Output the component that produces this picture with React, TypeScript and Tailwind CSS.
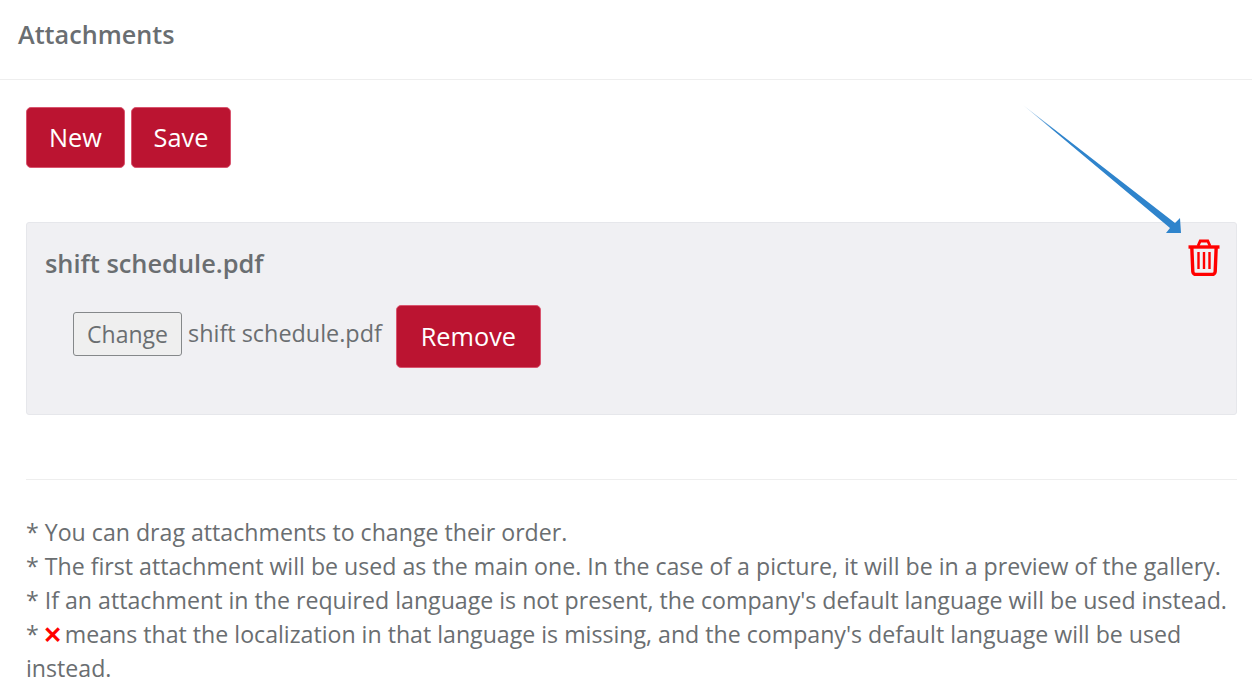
const openSans = { fontFamily: '"Open Sans", sans-serif' };

function TrashIcon() {
  return (
    <svg width="32" height="37" viewBox="0 0 32 37" fill="none" stroke="#ff0000" className="block">
      <path d="M0.500 8h31" strokeWidth="3.400" />
      <path d="M10 7l2.200-5h7.600l2.200 5" strokeWidth="2.800" />
      <path d="M3.800 8l1 24.500a3 3 0 0 0 3 3h16.400a3 3 0 0 0 3-3l1-24.500" strokeWidth="3.400" />
      <path d="M10.500 13v17M16 13v17M21.500 13v17" strokeWidth="2.400" />
    </svg>
  );
}

function RedButton({ label, className }: { label: string; className: string }) {
  return (
    <button className={`flex items-center justify-center rounded-[5px] border border-[#d9556f] bg-[#bb1431] text-[25.300px] text-white ${className}`}>
      {label}
    </button>
  );
}

export default function App() {
  return (
    <div className="relative h-[697px] w-[1252px] overflow-hidden bg-white text-[#6a6e71]" style={openSans}>
      {/* Header */}
      <div className="flex h-[80px] items-start border-b border-[#eeeeee] pl-[18px] pt-[17px]">
        <span className="text-[25.200px] font-semibold leading-[34px]">Attachments</span>
      </div>

      <div className="pl-[26px] pr-[15px] pt-[27px]">
        <div className="flex gap-[6px]">
          <RedButton label="New" className="h-[61px] w-[99px]" />
          <RedButton label="Save" className="h-[61px] w-[100px]" />
        </div>

        {/* Attachment card */}
        <div className="mt-[54px] h-[193px] rounded-[3px] border border-[#e6e7eb] bg-[#f0f0f3] pl-[18px] pt-[23px]">
          <div className="text-[25.400px] font-semibold leading-[34px]">shift schedule.pdf</div>
          <div className="mt-[25px] flex items-start pl-[28px]">
            <button className="mt-[7px] flex h-[44px] w-[109px] items-center justify-center rounded-[3px] border border-[#85888a] bg-[#efefef] text-[23px]">
              Change
            </button>
            <span className="ml-[6px] mt-[12px] text-[23.400px] leading-[32px]">shift schedule.pdf</span>
            <RedButton label="Remove" className="ml-[14px] h-[63px] w-[145px]" />
          </div>
        </div>

        <div className="mt-[64px] border-t border-[#eeeeee] pt-[35px] text-[23.150px] leading-[34px]">
          <div>* You can drag attachments to change their order.</div>
          <div>* The first attachment will be used as the main one. In the case of a picture, it will be in a preview of the gallery.</div>
          <div>* If an attachment in the required language is not present, the company's default language will be used instead.</div>
          <div>
            * <span className="-ml-[2px] -mr-[3px] font-bold text-[#ff0000]">✕</span> means that the localization in that language is missing, and the company's default language will be used instead.
          </div>
        </div>
      </div>

      {/* Annotation arrow */}
      <svg className="absolute left-[1020px] top-[100px]" width="170" height="140" viewBox="0 0 170 140">
        <defs>
          <linearGradient id="fade" x1="0" y1="0" x2="1" y2="1">
            <stop offset="0" stopColor="#2f84cc" stopOpacity="0.2" />
            <stop offset="0.2" stopColor="#2f84cc" />
          </linearGradient>
        </defs>
        <path d="M3 5L155 123L160 118L161 133L146 133L150 128Z" fill="url(#fade)" />
      </svg>

      <div className="absolute left-[1188px] top-[239px]">
        <TrashIcon />
      </div>
    </div>
  );
}
